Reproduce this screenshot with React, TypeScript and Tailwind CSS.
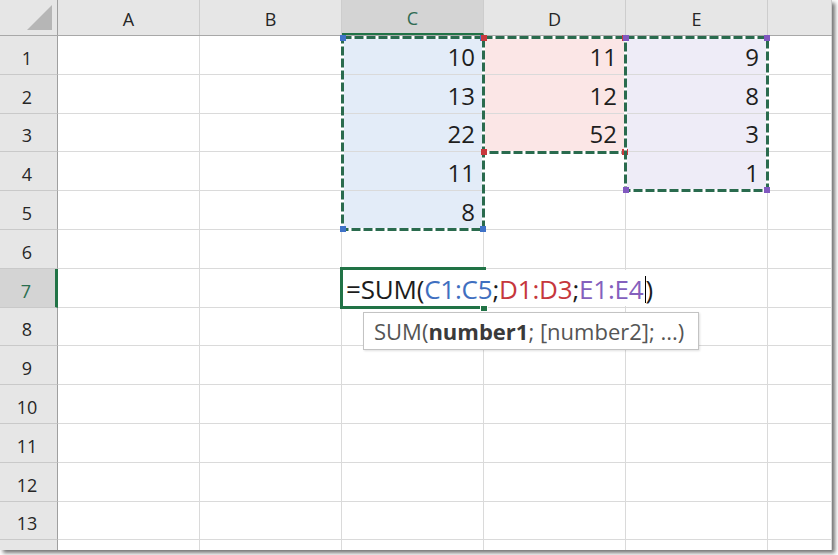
const COLS = ["A", "B", "C", "D", "E", "F"];
const ROW_H = [39, 39, 38, 39, 39, 39, 39, 38, 39, 39, 39, 39, 38];

const RANGES: Record<string, { values: number[]; fill: string }> = {
  C: { values: [10, 13, 22, 11, 8], fill: "bg-[#e3ecf8]" },
  D: { values: [11, 12, 52], fill: "bg-[#fbe6e6]" },
  E: { values: [9, 8, 3, 1], fill: "bg-[#eeecf7]" },
};

const font = "font-['Open_Sans',sans-serif]";

function Marquee({
  w,
  h,
  corner,
  className,
}: {
  w: number;
  h: number;
  corner: string;
  className: string;
}) {
  const s = 6;
  return (
    <svg
      width={w}
      height={h}
      className={`pointer-events-none absolute overflow-visible ${className}`}
    >
      <rect x={1.5} y={1.5} width={w - 3} height={h - 3} fill="none" stroke="#ffffff" strokeWidth={3} />
      <rect
        x={1.5}
        y={1.5}
        width={w - 3}
        height={h - 3}
        fill="none"
        stroke="#2a6b4e"
        strokeWidth={3}
        strokeDasharray="9 3"
      />
      <rect x={-1} y={-1} width={s} height={s} fill={corner} />
      <rect x={w - s + 1} y={-1} width={s} height={s} fill={corner} />
      <rect x={-1} y={h - s + 1} width={s} height={s} fill={corner} />
      <rect x={w - s + 1} y={h - s + 1} width={s} height={s} fill={corner} />
    </svg>
  );
}

function ColHeader({ c }: { c: string }) {
  const active = c === "C";
  return (
    <div
      className={`flex shrink-0 items-center justify-center border-r border-[#cdcdcd] pt-[3px] text-[18px] ${
        c === "F" ? "w-[64px]" : "w-[142px]"
      } ${active ? "border-b-2 border-b-[#217346] bg-[#d4d4d4] text-[#2f6b52]" : "text-[#262626]"}`}
    >
      {c === "F" ? "" : c}
    </div>
  );
}

function Cell({ col, row }: { col: string; row: number }) {
  const range = RANGES[col];
  const value = range?.values[row];
  const filled = value !== undefined;
  return (
    <div
      className={`flex shrink-0 items-center justify-end border-r border-b border-[#dadada] pr-[8px] pt-[3px] text-[24px] text-[#1e1e1e] ${
        col === "F" ? "w-[64px]" : "w-[142px]"
      } ${filled ? range.fill : "bg-white"}`}
    >
      {value}
    </div>
  );
}

function Row({ row, h }: { row: number; h: number }) {
  const active = row === 6;
  return (
    <div className={`flex ${h === 38 ? "h-[38px]" : "h-[39px]"}`}>
      <div
        className={`flex w-[58px] shrink-0 items-center justify-center border-b border-[#c9c9c9] pr-[3px] pt-[6px] text-[18px] ${
          active
            ? "border-r-[3px] border-r-[#217346] bg-[#d4d4d4] text-[#2a6e4f]"
            : "border-r border-r-[#9f9f9f] bg-[#e6e6e6] text-[#262626]"
        }`}
      >
        {row + 1}
      </div>
      {COLS.map((c) => (
        <Cell key={c} col={c} row={row} />
      ))}
    </div>
  );
}

export default function App() {
  return (
    <div className={`h-[555px] w-[838px] bg-white ${font}`}>
      <div className="relative h-[550px] w-[832px] overflow-hidden bg-white shadow-[3px_3px_4px_rgba(0,0,0,0.55)]">
        {/* header */}
        <div className="flex h-[36px] border-b border-[#a8a8a8] bg-[#e6e6e6]">
          <div className="flex w-[58px] shrink-0 items-end justify-end border-r border-[#9f9f9f] pr-[5px] pb-[5px]">
            <svg width="25" height="25">
              <polygon points="25,0 25,25 0,25" fill="#b6b6b6" />
            </svg>
          </div>
          {COLS.map((c) => (
            <ColHeader key={c} c={c} />
          ))}
        </div>

        {ROW_H.map((h, i) => (
          <Row key={i} row={i} h={h} />
        ))}
        <div className="flex h-[12px]">
          <div className="w-[58px] shrink-0 border-r border-[#9f9f9f] bg-[#e6e6e6]" />
          {COLS.map((c) => (
            <div
              key={c}
              className={`shrink-0 border-r border-[#dadada] ${c === "F" ? "w-[64px]" : "w-[142px]"}`}
            />
          ))}
        </div>

        {/* referenced ranges */}
        <Marquee w={144} h={195} corner="#3f72c8" className="left-[341px] top-[36px]" />
        <Marquee w={145} h={118} corner="#c8383d" className="left-[482px] top-[36px]" />
        <Marquee w={145} h={156} corner="#8159c0" className="left-[624px] top-[36px]" />

        {/* active cell C7 in edit mode */}
        <div className="absolute left-[340px] top-[267px] h-[42px] w-[146px] border-y-[3px] border-l-[3px] border-[#217346]" />
        <div className="absolute left-[343px] top-[270px] flex h-[36px] w-[322px] items-center bg-white pl-[3px] pt-[2px] text-[26px] leading-none tracking-[-0.2px] text-[#1c1c1c]">
          <span>=SUM(</span>
          <span className="text-[#3f6fc0]">C1:C5</span>
          <span>;</span>
          <span className="text-[#c6373c]">D1:D3</span>
          <span>;</span>
          <span className="text-[#8460bd]">E1:E4</span>
          <span className="ml-[1px] inline-block h-[27px] w-px bg-black" />
          <span>)</span>
        </div>
        <div className="absolute left-[480px] top-[305px] h-[7px] w-[8px] border border-white bg-[#217346]" />

        {/* function tooltip */}
        <div className="absolute left-[363px] top-[312px] flex h-[38px] w-[336px] items-center border border-[#c3c3c3] bg-white pl-[10px] text-[22px] text-[#555555] shadow-[1px_1px_2px_rgba(0,0,0,0.12)]">
          SUM(<b className="font-bold text-[#3a3a3a]">number1</b>; [number2]; ...)
        </div>
      </div>
    </div>
  );
}
